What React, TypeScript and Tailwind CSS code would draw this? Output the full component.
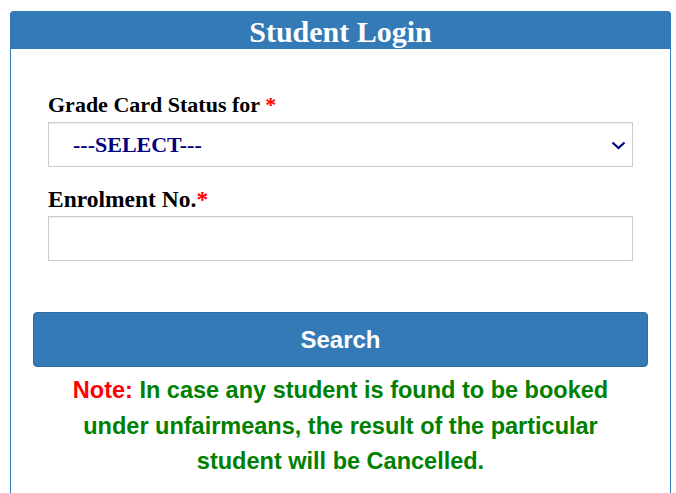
import React from 'react';

const App: React.FC = () => {
    return (
        <div className="min-h-screen bg-white pt-[11px] pl-[10px] pr-[5px]">
            {/* Panel */}
            <div className="rounded-t-[4px] border border-[#337ab7] bg-white">
                {/* Header */}
                <div className="-mx-px -mt-px h-[38px] rounded-t-[4px] bg-[#337ab7] pt-[2px] text-center font-['Liberation_Serif',serif] text-[30px] font-bold leading-[38px] text-white">
                    Student Login
                </div>

                {/* Body */}
                <div className="px-[22px] pt-[44px] pb-[60px]">
                    <div className="px-[15px]">
                        <label className="block font-['Liberation_Serif',serif] text-[22px] font-bold leading-[24px] text-black">
                            Grade Card Status for <span className="text-[#ff0000]">*</span>
                        </label>
                        <div className="mt-[5px] flex h-[45px] items-center justify-between border border-[#cccccc] bg-white pl-[24px] pr-[6px] shadow-[inset_0_1px_1px_rgba(0,0,0,0.075)]">
                            <span className="font-['Liberation_Serif',serif] text-[22px] font-bold text-[#000080]">---SELECT---</span>
                            <svg width="15" height="9" viewBox="0 0 15 9" className="mt-[1px]">
                                <path d="M1.5 1.5 L7.5 7 L13.5 1.5" fill="none" stroke="#000080" strokeWidth="2.2" />
                            </svg>
                        </div>

                        <label className="mt-[20px] block font-['Liberation_Serif',serif] text-[23.5px] font-bold leading-[24px] text-black">
                            Enrolment No.<span className="text-[#ff0000]">*</span>
                        </label>
                        <div className="mt-[5px] h-[45px] border border-[#cccccc] bg-white shadow-[inset_0_1px_1px_rgba(0,0,0,0.075)]" />
                    </div>

                    <button className="mt-[51px] flex h-[55px] w-full items-center justify-center rounded-[4px] border border-[#2e6da4] bg-[#337ab7] font-['Liberation_Sans',Arial,sans-serif] text-[24px] font-bold text-white">
                        Search
                    </button>

                    <p className="mt-[6px] px-[20px] text-center font-['Liberation_Sans',Arial,sans-serif] text-[23.5px] font-bold leading-[35.5px] text-[#008000]">
                        <span className="text-[#ff0000]">Note:</span> In case any student is found to be booked under unfairmeans, the result of the particular student will be Cancelled.
                    </p>
                </div>
            </div>
        </div>
    );
};

export default App;
